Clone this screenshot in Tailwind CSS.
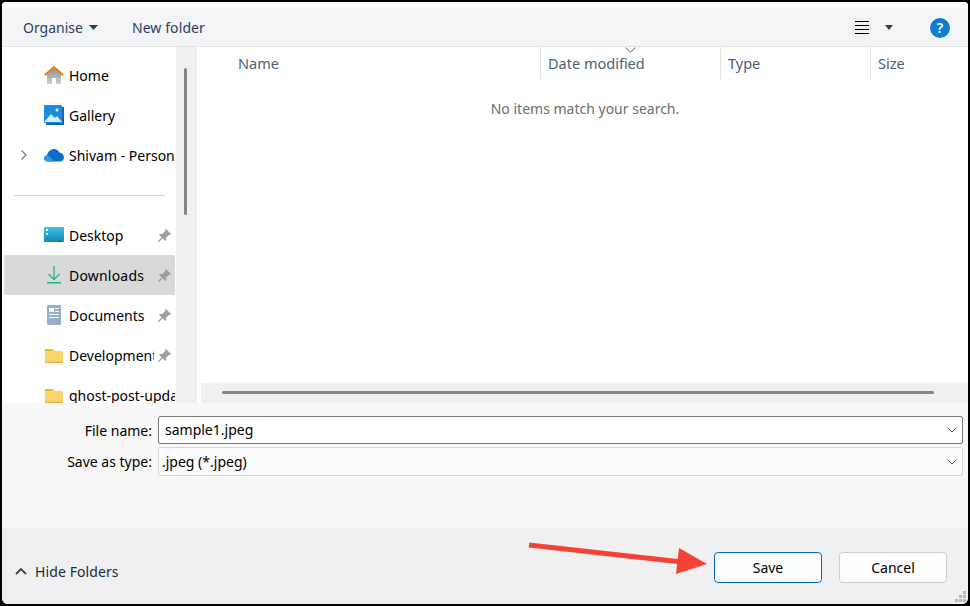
<!DOCTYPE html>
<html lang="en">
<head>
  <meta charset="UTF-8">
  <title>Save As</title>
  <script src="https://cdn.jsdelivr.net/npm/@tailwindcss/browser@4"></script>
</head>
<body class="bg-white overflow-hidden">
<div class="relative w-[970px] h-[606px] bg-black font-['Noto_Sans','Open_Sans',sans-serif] text-[14px] text-[#1a1a1a]">
  <div class="absolute inset-x-[2px] top-[2px] bottom-[2px] rounded-t-[4px] rounded-b-[6px] bg-white overflow-hidden flex flex-col">

    <!-- toolbar -->
    <div class="h-[45px] shrink-0 pt-[6px] bg-white">
      <div class="h-[39px] bg-[#f3f4f6] border-b border-[#e3e3e3] flex items-center text-[#2b3f63] pt-[1px]">
        <span class="ml-[21px]">Organise</span>
        <svg class="ml-[6px] mt-[-1px]" width="9" height="5" viewBox="0 0 9 5"><path d="M0 0h9L4.500 5z" fill="#2b3f63"/></svg>
        <span class="ml-[34px] tracking-[0.1px]">New folder</span>
        <div class="ml-auto w-[20px] h-[20px] flex flex-col justify-center gap-[3px] px-[3px] bg-[#f0f1f2]">
          <div class="h-px bg-black"></div><div class="h-px bg-black"></div><div class="h-px bg-black"></div><div class="h-px bg-black"></div>
        </div>
        <svg class="ml-[13px]" width="8" height="5" viewBox="0 0 8 5"><path d="M0 0h8L4 5z" fill="#2b3f63"/></svg>
        <div class="ml-[37px] mr-[18px] w-[20px] h-[20px] rounded-full bg-[#0f7dd1] text-white flex items-center justify-center text-[14px] font-semibold">?</div>
      </div>
    </div>

    <!-- main -->
    <div class="flex h-[356px] shrink-0">
      <!-- nav pane -->
      <div class="w-[174px] shrink-0 pt-[8px] pl-[2px] pr-[1px] overflow-hidden">
        <div class="h-[40px] flex items-center">
          <svg class="ml-[40px] mr-[5px]" width="20" height="20" viewBox="0 0 20 20"><defs><linearGradient id="homeWall" x1="0" y1="0" x2="0" y2="1"><stop offset="0" stop-color="#8f8f8f"/><stop offset="1" stop-color="#cfcfcf"/></linearGradient></defs><path d="M3 9l7-6 7 6v10h-5v-6H8v6H3z" fill="url(#homeWall)"/><path d="M1 10l9-8 9 8" fill="none" stroke="#e87d0d" stroke-width="2"/></svg>
          <span class="text-black">Home</span>
        </div>
        <div class="h-[40px] flex items-center">
          <svg class="ml-[40px] mr-[5px]" width="20" height="20" viewBox="0 0 20 20"><rect x="0" y="0" width="18" height="18" rx="1" fill="#1a8ddb"/><path d="M18 2h2v18H2v-2h16z" fill="#1565b0"/><path d="M0 17l7-8 4 4 2-2 5 6z" fill="#d8ecfa"/><circle cx="13" cy="5" r="1.500" fill="#fff"/></svg>
          <span class="text-black">Gallery</span>
        </div>
        <div class="h-[40px] flex items-center">
          <svg class="ml-[16px]" width="8" height="12" viewBox="0 0 8 12"><path d="M1.500 1.500L6 6l-4.500 4.500" fill="none" stroke="#808080" stroke-width="1.400"/></svg>
          <svg class="ml-[16px] mr-[5px]" width="20" height="14" viewBox="0 0 20 14"><path d="M3.500 13.500C1.500 13.500 0 12 0 10.300 0 8.500 1.500 7.300 3 7.200 4 3.500 7 1 10 1c2.500 0 4.300 1.300 5.300 3.500 2.700.2 4.700 2.500 4.700 5 0 2.300-1.700 4-3.700 4z" fill="#0f6cc8"/><path d="M3.500 13.500C1.500 13.500 0 12 0 10.300 0 8.500 1.500 7.500 3.500 7.500c2 0 5 4 7 6z" fill="#2a9be8"/></svg>
          <span class="text-black whitespace-nowrap w-[105px] overflow-hidden">Shivam - Personal</span>
        </div>
        <div class="h-[40px] flex items-center"><div class="ml-[10px] w-[151px] h-px bg-[#d5d5d5]"></div></div>
        <div class="h-[40px] flex items-center">
          <svg class="ml-[40px] mr-[5px]" width="20" height="16" viewBox="0 0 20 16"><defs><linearGradient id="deskFill" x1="0" y1="0" x2="0" y2="1"><stop offset="0" stop-color="#3fc3e8"/><stop offset="1" stop-color="#0f86b8"/></linearGradient></defs><rect width="20" height="15" rx="1" fill="url(#deskFill)"/><rect x="2" y="2" width="2" height="2" fill="#fff"/><rect x="2" y="6" width="2" height="2" fill="#fff"/><rect x="14" y="14" width="4" height="1" fill="#0b5f86"/></svg>
          <span class="text-black w-[89px]">Desktop</span>
          <svg width="13" height="13" viewBox="0 0 13 13"><path d="M8 0l5 5-1 1-1-.300-3 3 .300 2.300-1 1-2.800-2.800L1 13 0 12l3.800-3.500L1 5.800l1-1 2.300.300 3-3L7 1z" fill="#9aa0a6"/></svg>
        </div>
        <div class="h-[40px] flex items-center bg-[#d9d9d9] rounded-[2px]">
          <svg class="ml-[43px] mr-[8px]" width="14" height="18" viewBox="0 0 14 18"><path d="M7 0v13M1.500 8L7 13.500 12.500 8" fill="none" stroke="#1cb495" stroke-width="1.300"/><rect y="16" width="14" height="1.500" fill="#1cb495"/></svg>
          <span class="text-black w-[89px] tracking-[0.2px]">Downloads</span>
          <svg width="13" height="13" viewBox="0 0 13 13"><path d="M8 0l5 5-1 1-1-.300-3 3 .300 2.300-1 1-2.800-2.800L1 13 0 12l3.800-3.500L1 5.800l1-1 2.300.300 3-3L7 1z" fill="#9aa0a6"/></svg>
        </div>
        <div class="h-[40px] flex items-center">
          <svg class="ml-[43px] mr-[8px]" width="14" height="20" viewBox="0 0 14 20"><rect width="14" height="20" rx="1" fill="#96aec9"/><rect x="2" y="3" width="5" height="4" fill="#fff"/><rect x="8" y="3" width="4" height="1" fill="#fff"/><rect x="8" y="6" width="4" height="1" fill="#fff"/><rect x="2" y="9" width="10" height="1" fill="#fff"/><rect x="2" y="12" width="10" height="1" fill="#fff"/></svg>
          <span class="text-black w-[89px]">Documents</span>
          <svg width="13" height="13" viewBox="0 0 13 13"><path d="M8 0l5 5-1 1-1-.300-3 3 .300 2.300-1 1-2.800-2.800L1 13 0 12l3.800-3.500L1 5.800l1-1 2.300.300 3-3L7 1z" fill="#9aa0a6"/></svg>
        </div>
        <div class="h-[40px] flex items-center">
          <svg class="ml-[41px] mr-[6px]" width="18" height="15" viewBox="0 0 18 15"><path d="M0 1h7l2 2v2H0z" fill="#f5b31f"/><rect y="3" width="18" height="12" rx="1" fill="#fbd66e"/><rect y="13.500" width="18" height="1.500" fill="#eeb546"/></svg>
          <span class="text-black w-[85px] whitespace-nowrap overflow-hidden">Development</span>
          <svg class="ml-[4px]" width="13" height="13" viewBox="0 0 13 13"><path d="M8 0l5 5-1 1-1-.300-3 3 .300 2.300-1 1-2.800-2.800L1 13 0 12l3.800-3.500L1 5.800l1-1 2.300.300 3-3L7 1z" fill="#9aa0a6"/></svg>
        </div>
        <div class="h-[40px] flex items-center">
          <svg class="ml-[41px] mr-[6px]" width="18" height="15" viewBox="0 0 18 15"><path d="M0 1h7l2 2v2H0z" fill="#f5b31f"/><rect y="3" width="18" height="12" rx="1" fill="#fbd66e"/><rect y="13.500" width="18" height="1.500" fill="#eeb546"/></svg>
          <span class="text-black w-[106px] whitespace-nowrap overflow-hidden">ghost-post-update</span>
        </div>
      </div>
      <!-- nav scrollbar -->
      <div class="w-[20px] shrink-0 bg-[#f0f0f0] pt-[21px] pl-[8px]">
        <div class="w-[3px] h-[147px] rounded-full bg-[#858585]"></div>
      </div>
      <div class="w-[5px] shrink-0 bg-white border-l border-[#f2f2f2]"></div>

      <!-- file list -->
      <div class="flex-1 flex flex-col min-w-0 relative">
        <div class="h-[32px] flex items-center text-[#4c607a] text-[14.500px] shrink-0 -ml-[3px]">
          <div class="w-[342px] h-full pl-[40px] pt-[2px] flex items-center">Name</div>
          <div class="relative w-[180px] h-full border-l border-[#e5e5e5] pl-[7px] pt-[2px] flex items-center">Date modified
            <svg class="absolute left-[84px] top-[0px]" width="11" height="6" viewBox="0 0 11 6"><path d="M.500.500l5 4.500 5-4.500" fill="none" stroke="#666" stroke-width="1"/></svg>
          </div>
          <div class="w-[150px] h-full border-l border-[#e5e5e5] pl-[7px] pt-[2px] flex items-center">Type</div>
          <div class="flex-1 h-full border-l border-[#e5e5e5] pl-[7px] pt-[2px] flex items-center">Size</div>
        </div>
        <div class="flex-1 text-center text-[#6d6d6d] pt-[19px] ml-[1px]">No items match your search.</div>
        <div class="h-[20px] shrink-0 bg-[#f0f0f0] pt-[8px] pl-[21px]">
          <div class="w-[712px] h-[3px] rounded-full bg-[#858585]"></div>
        </div>
      </div>
    </div>

    <!-- file name fields -->
    <div class="h-[125px] shrink-0 bg-[#f8f8f8] pt-[13px]">
      <div class="flex items-center h-[28px]">
        <label class="w-[150px] text-right text-black">File name:</label>
        <div class="ml-[6px] w-[805px] h-full bg-white border border-[#7a7a7a] rounded-[2px] flex items-center pl-[6px] pr-[5px] pb-[1px] text-black">
          <span>sample1.jpeg</span>
          <svg class="ml-auto" width="10" height="6" viewBox="0 0 10 6"><path d="M.500.500L5 5 9.500.500" fill="none" stroke="#555" stroke-width="1"/></svg>
        </div>
      </div>
      <div class="flex items-center h-[29px] mt-[3px]">
        <label class="w-[150px] text-right text-black">Save as type:</label>
        <div class="ml-[6px] w-[805px] h-full bg-[#fbfbfb] border border-[#d6d6d6] rounded-[2px] flex items-center pl-[3px] pr-[5px] text-black">
          <span>.jpeg (*.jpeg)</span>
          <svg class="ml-auto" width="10" height="6" viewBox="0 0 10 6"><path d="M.500.500L5 5 9.500.500" fill="none" stroke="#555" stroke-width="1"/></svg>
        </div>
      </div>
    </div>

    <!-- footer -->
    <div class="flex-1 bg-[#f0f0f0] flex items-center">
      <svg class="ml-[13px] mt-[9px]" width="12" height="8" viewBox="0 0 12 8"><path d="M1 7l5-5 5 5" fill="none" stroke="#444" stroke-width="1.800"/></svg>
      <span class="ml-[8px] mt-[11px] text-[#1a2a44] tracking-[0.1px]">Hide Folders</span>
      <button class="ml-auto mt-[2px] w-[108px] h-[31px] bg-[#fdfdfd] border border-[#0067c0] rounded-[4px] text-black">Save</button>
      <button class="ml-[17px] mr-[21px] mt-[2px] w-[108px] h-[31px] bg-[#fdfdfd] border border-[#cccccc] rounded-[4px] text-black">Cancel</button>
    </div>
  </div>

  <!-- red annotation arrow -->
  <svg class="absolute left-[520px] top-[535px]" width="200" height="50" viewBox="0 0 200 50"><path d="M9 10L162 27" stroke="#f44336" stroke-width="5" fill="none"/><path d="M159 13L156 39 187 29z" fill="#f44336"/></svg>

  <!-- resize grip -->
  <svg class="absolute left-[955px] top-[590px]" width="12" height="12" viewBox="0 0 12 12"><g fill="#b8b8b8"><rect x="8" y="1" width="3" height="3"/><rect x="4" y="5" width="3" height="3"/><rect x="8" y="5" width="3" height="3"/><rect x="0" y="9" width="3" height="3"/><rect x="4" y="9" width="3" height="3"/><rect x="8" y="9" width="3" height="3"/></g></svg>
</div>
</body>
</html>
